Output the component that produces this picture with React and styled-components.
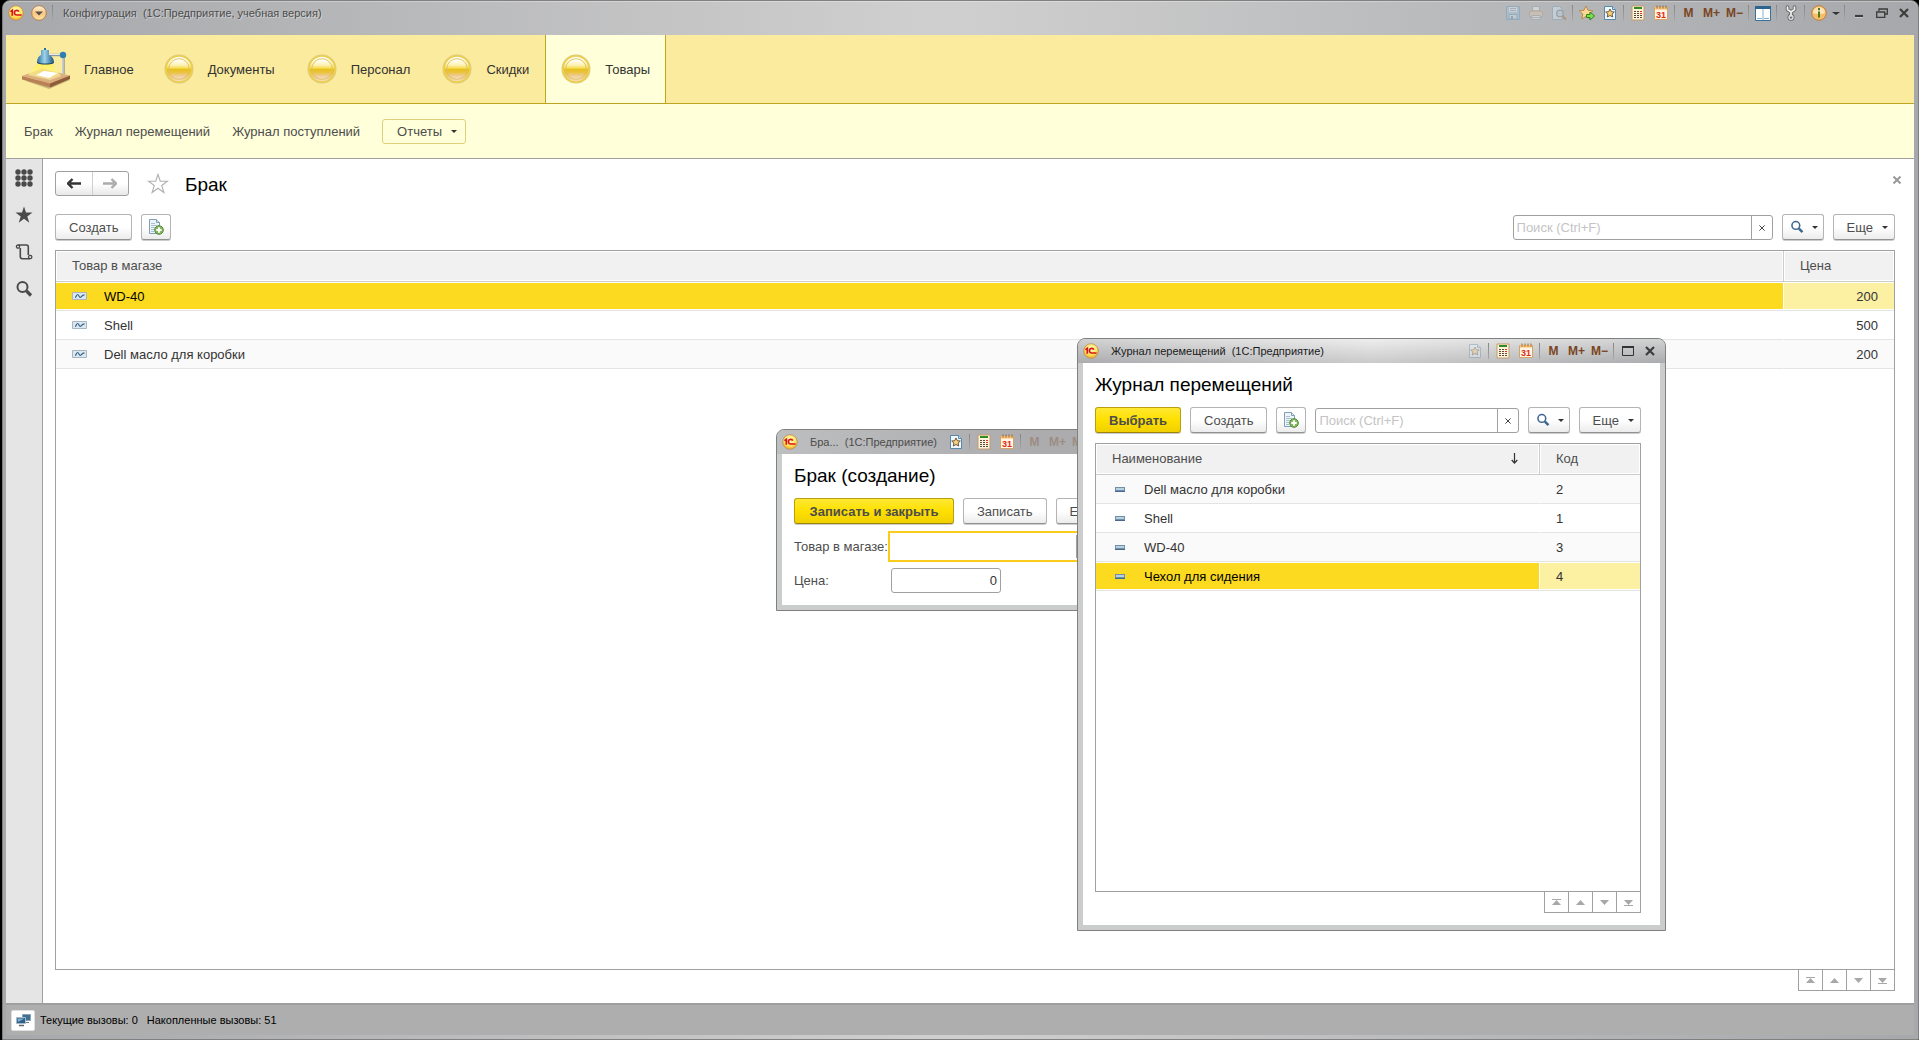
import React from 'react'
import styled, { createGlobalStyle } from 'styled-components';

const GlobalStyle = createGlobalStyle`
  * {
    box-sizing: border-box;
  }
  body {
    margin: 0;
    background: #000000;
    font-family: "Liberation Sans", Arial, sans-serif;
    font-size: 13px;
    color: #404040;
  }
  button, input {
    font-family: inherit;
    font-size: inherit;
    color: inherit;
  }
  svg {
    display: block;
    flex: none;
  }
`;

/* ---------- icons ---------- */

const Logo = () => (
  <svg width="16" height="16" viewBox="0 0 16 16">
    <defs>
      <radialGradient id="logoFill" cx="50%" cy="35%" r="65%">
        <stop offset="0" stopColor="#fffbd0" />
        <stop offset="0.6" stopColor="#ffe65c" />
        <stop offset="1" stopColor="#f0a830" />
      </radialGradient>
    </defs>
    <circle cx="8" cy="8" r="7.3" fill="url(#logoFill)" stroke="#b98a5a" strokeWidth="0.8" />
    <path d="M2.400 6.600 4.300 5.400V10.800" fill="none" stroke="#d8141c" strokeWidth="1.700" />
    <path d="M10.800 6.700A2.300 2.300 0 1 0 8.800 10H13.600" fill="none" stroke="#d8141c" strokeWidth="1.700" />
  </svg>
);

const MenuBall = () => (
  <svg width="16" height="16" viewBox="0 0 16 16">
    <defs>
      <linearGradient id="ballFill" x1="0" y1="0" x2="0" y2="1">
        <stop offset="0" stopColor="#fff3df" />
        <stop offset="0.5" stopColor="#f9c884" />
        <stop offset="1" stopColor="#ffe0a0" />
      </linearGradient>
    </defs>
    <circle cx="8" cy="8" r="7.3" fill="url(#ballFill)" stroke="#b07c48" strokeWidth="0.9" />
    <path d="M4 6.6h8L8 10.6z" fill="#5a5148" />
  </svg>
);

const SaveIcon = () => (
  <svg width="16" height="16" viewBox="0 0 16 16" opacity="0.45">
    <path d="M1.5 1.5h13v13h-13z" fill="#9fc4de" stroke="#6a9cc2" />
    <path d="M4 2h8v5H4z" fill="#e8f0f6" />
    <path d="M5 3.5h6M5 5.5h6" stroke="#8aa4b8" />
    <path d="M4 9.500h8V14H4z" fill="#d4e2ec" stroke="#6a9cc2" />
    <path d="M6 11h2v3H6z" fill="#5f8db0" />
  </svg>
);

const PrintIcon = () => (
  <svg width="16" height="16" viewBox="0 0 16 16" opacity="0.45">
    <path d="M4.500 1.500h7V6h-7z" fill="#f4f4f4" stroke="#8ea3b4" />
    <rect x="1.500" y="6" width="13" height="6" rx="1.500" fill="#e6c9a8" stroke="#a8957e" />
    <path d="M4 10.500h8v4H4z" fill="#f4f4f4" stroke="#8ea3b4" />
    <path d="M5 12.500h6" stroke="#8ea3b4" />
  </svg>
);

const PreviewIcon = () => (
  <svg width="16" height="16" viewBox="0 0 16 16" opacity="0.45">
    <path d="M1.500 1.500h7l3 3v10h-10z" fill="#dbe9f3" stroke="#7fa5c0" />
    <circle cx="9" cy="8.500" r="3.300" fill="#bcd6e8" stroke="#6b8aa2" strokeWidth="1.300" />
    <path d="m11.500 11 3.500 3.500" stroke="#a9713f" strokeWidth="2.200" />
  </svg>
);

const StarGoIcon = () => (
  <svg width="16" height="16" viewBox="0 0 16 16">
    <path d="m7 1 2 4.300 5 .5-3.700 3.200 1 5L7 11.400 2.800 14l1-5L.3 5.800l4.700-.5z" fill="#fbd891" stroke="#b08447" strokeWidth="0.900" />
    <path d="M7.500 9.500h3.500V7l4.600 4-4.600 4v-2.500H7.500z" fill="#7fe04a" stroke="#2b8420" />
  </svg>
);

const DocStarIcon = ({ faded }) => (
  <svg width="14" height="16" viewBox="0 0 14 16" opacity={faded ? 0.35 : 1}>
    <path d="M1.500 1.500h8l3 3v10h-11z" fill="#f1f8fd" stroke="#5689ab" />
    <path d="M9.500 1.500v3h3" fill="#c6dceb" stroke="#5689ab" />
    <path d="m7 4 1.300 2.700 3 .3-2.200 2 .6 3L7 10.500 4.300 12l.6-3-2.200-2 3-.3z" fill="#fad079" stroke="#5e4a31" strokeWidth="0.900" />
  </svg>
);

const CalcIcon = () => (
  <svg width="14" height="16" viewBox="0 0 14 16">
    <path d="M1 1h12v14H1z" fill="#fff3dc" stroke="#c49a6c" />
    <path d="M3 2h8v2H3z" fill="#2f8c1e" />
    <path d="M3 6.500h2M3 8.500h2M3 10.500h2M3 12.500h2M6 6.500h2M6 8.500h2M6 10.500h2M6 12.500h2M9 10.500h2M9 12.500h2" stroke="#5c4a38" />
    <path d="M9 6.500h2M9 8.500h2" stroke="#e03020" />
  </svg>
);

const CalendarIcon = () => (
  <svg width="14" height="16" viewBox="0 0 14 16">
    <path d="M.5 2.500h13v12H.5z" fill="#fff6e6" stroke="#d3a468" />
    <path d="M1 2h12v2.500H1z" fill="#f6bf72" />
    <path d="M3 .5v3M6 .5v3M9 .5v3M12 .5v3" stroke="#9b6a34" />
    <text x="7" y="13" textAnchor="middle" fontSize="9" fontWeight="bold" fill="#e02a14">31</text>
  </svg>
);

const ColumnsIcon = () => (
  <svg width="16" height="15" viewBox="0 0 16 15">
    <path d="M.5.5h15v14H.5z" fill="#ffffff" stroke="#39719c" />
    <path d="M0 0h16v3H0z" fill="#2d6591" />
    <path d="M8 3v11M2 12.500h5M9 12.500h5" stroke="#8db1cb" />
  </svg>
);

const WrenchIcon = () => (
  <svg width="12" height="16" viewBox="0 0 12 16" fill="none" strokeLinecap="round" strokeLinejoin="round">
    <path d="M2.500 2v2.500L6 7l3.500-2.500V2M6 7v4" stroke="#666666" strokeWidth="3.600" />
    <circle cx="6" cy="12.300" r="2" stroke="#666666" strokeWidth="3" />
    <path d="M2.500 2v2.500L6 7l3.500-2.500V2M6 7v4" stroke="#f2f2f2" strokeWidth="1.700" />
    <circle cx="6" cy="12.300" r="2" stroke="#e4e4e4" strokeWidth="1.300" />
  </svg>
);

const InfoIcon = () => (
  <svg width="16" height="16" viewBox="0 0 16 16">
    <circle cx="8" cy="8" r="7.300" fill="#f8bd68" stroke="#b97b3a" strokeWidth="0.900" />
    <path d="M2 8a6 6 0 0 1 12 0c-3 1.500-9 1.500-12 0z" fill="#fde3b8" />
    <path d="M8 3v2.200M8 6.500v6" stroke="#4d7a1c" strokeWidth="2" />
  </svg>
);

const Caret = ({ size = 6, color = '#333333' }) => (
  <svg width={size} height="3" viewBox="0 0 6 3" preserveAspectRatio="none">
    <path d="M0 0h6L3 3z" fill={color} />
  </svg>
);

const MinimizeIcon = () => (
  <svg width="12" height="12" viewBox="0 0 12 12">
    <path d="M2 10.500h8" stroke="#ffffff" strokeOpacity="0.5" />
    <path d="M2 9h8" stroke="#3c3c3c" strokeWidth="2.200" />
  </svg>
);

const RestoreIcon = () => (
  <svg width="12" height="12" viewBox="0 0 12 12">
    <path d="M3 4V2h8.300v5H9" fill="none" stroke="#3c3c3c" strokeWidth="1.300" />
    <path d="M.7 5h8v5.300h-8z" fill="none" stroke="#3c3c3c" strokeWidth="1.300" />
  </svg>
);

const MaximizeIcon = () => (
  <svg width="12" height="12" viewBox="0 0 12 12">
    <path d="M.5 1.500h11v9H.5z" fill="none" stroke="#333333" />
    <path d="M0 2h12" stroke="#333333" strokeWidth="2" />
  </svg>
);

const CloseIcon = () => (
  <svg width="10" height="10" viewBox="0 0 10 10">
    <path d="m1 1 8 8M9 1 1 9" stroke="#3c3c3c" strokeWidth="2.200" />
  </svg>
);

const SmallCross = ({ size = 6, color = '#444444', weight = 1 }) => (
  <svg width={size} height={size} viewBox="0 0 6 6">
    <path d="M.4.4l5.200 5.200M5.600.4.4 5.600" stroke={color} strokeWidth={weight} />
  </svg>
);

const LampIcon = () => (
  <svg width="48" height="42" viewBox="0 0 48 42">
    <defs>
      <linearGradient id="beam" x1="0" y1="0" x2="0" y2="1">
        <stop offset="0" stopColor="#fff04a" />
        <stop offset="1" stopColor="#fff9b0" stopOpacity="0.600" />
      </linearGradient>
      <linearGradient id="shade" x1="0" y1="0" x2="1" y2="0">
        <stop offset="0" stopColor="#2b6f9c" />
        <stop offset="0.450" stopColor="#9bd3ec" />
        <stop offset="1" stopColor="#1b5480" />
      </linearGradient>
    </defs>
    <path d="M4 33 27 41l21-9-4-3z" fill="#8a7a50" opacity="0.450" />
    <path d="M0 28 20 20.500 48 27.500 28 35.500z" fill="#dcae7e" />
    <path d="M0 28 28 35.500V39.500L0 31.500z" fill="#b98055" />
    <path d="M28 35.500 48 27.500V31L28 39.500z" fill="#8f5c3a" />
    <path d="M16 15h14l9 13-11 4-22-5z" fill="url(#beam)" opacity="0.850" />
    <path d="m14 27 8-4 14 2-9 5z" fill="#ffffff" />
    <path d="M27 7h14" stroke="#8f969b" strokeWidth="2.400" />
    <path d="M27 6.500h14" stroke="#e8ecef" />
    <path d="M41.500 8v18" stroke="#8f969b" strokeWidth="2.400" />
    <path d="M41 8v18" stroke="#e8ecef" />
    <circle cx="41" cy="7" r="3.200" fill="#2e7fb2" />
    <path d="M23 0v3" stroke="#2b6f9c" strokeWidth="2" />
    <path d="M19 2h8v5c3 1 5 4 5 7.500-4 2-13 2-17 0C15 11 16.500 8 19 7z" fill="url(#shade)" />
    <path d="M15 14c4 2 13 2 17 0v1c-4 2-13 2-17 0z" fill="#123f63" />
  </svg>
);

const CoinIcon = () => (
  <svg width="30" height="30" viewBox="0 0 30 30">
    <defs>
      <linearGradient id="coinFill" x1="0" y1="0" x2="0" y2="1">
        <stop offset="0.050" stopColor="#fffef4" />
        <stop offset="0.300" stopColor="#fdf3b8" />
        <stop offset="0.460" stopColor="#f6dc52" />
        <stop offset="0.520" stopColor="#e8c01c" />
        <stop offset="0.680" stopColor="#ebc444" />
        <stop offset="0.820" stopColor="#efcb92" />
        <stop offset="1" stopColor="#f8e2b8" />
      </linearGradient>
    </defs>
    <circle cx="15" cy="15" r="14.500" fill="#ddc98a" />
    <circle cx="15" cy="15" r="13" fill="url(#coinFill)" stroke="#ecd04a" strokeWidth="1.600" />
    <circle cx="15" cy="15" r="10.300" fill="url(#coinFill)" stroke="#dcc06a" strokeWidth="0.900" />
  </svg>
);

const GridIcon = () => (
  <svg width="18" height="18" viewBox="0 0 18 18" fill="#4a4a4a">
    {[3, 9, 15].map((y) => [3, 9, 15].map((x) => <circle key={`${x}-${y}`} cx={x} cy={y} r="2.700" />))}
  </svg>
);

const StarIcon = () => (
  <svg width="18" height="18" viewBox="0 0 18 18">
    <path d="m9 .5 2 6h6.500l-5.200 3.900 2 6.300L9 12.800l-5.300 3.900 2-6.300L.5 6.500H7z" fill="#4a4a4a" />
  </svg>
);

const ScrollIcon = () => (
  <svg width="18" height="18" viewBox="0 0 18 18" fill="none" stroke="#4a4a4a" strokeWidth="1.600">
    <path d="M3.500 2h8c1.200 0 1.800.8 1.800 2v8M5.300 5v8.500c0 1.300.7 2.200 2 2.200h8" />
    <circle cx="3" cy="3.600" r="1.600" strokeWidth="1.300" />
    <circle cx="15.200" cy="14" r="1.700" strokeWidth="1.300" />
  </svg>
);

const SearchIcon = ({ size = 18, color = '#4a4a4a' }) => (
  <svg width={size} height={size} viewBox="0 0 18 18" fill="none" stroke={color}>
    <circle cx="7.500" cy="7" r="5" strokeWidth="2" />
    <path d="m11.500 11 4.500 4.500" strokeWidth="3.200" />
  </svg>
);

const ArrowIcon = ({ flip, color }) => (
  <svg width="14" height="11" viewBox="0 0 14 11">
    <path d={flip ? 'M0 5.500h11M8.500 1l4.500 4.500L8.500 10' : 'M14 5.500H3M5.500 1 1 5.500 5.500 10'} fill="none" stroke={color} strokeWidth="2.400" />
  </svg>
);

const OutlineStar = () => (
  <svg width="22" height="21" viewBox="0 0 22 21">
    <path d="m11 1.500 2.300 6.700h7.200l-5.800 4.300 2.200 7L11 15.300l-5.900 4.200 2.200-7L1.500 8.200h7.200z" fill="#ffffff" stroke="#b0b0b0" strokeWidth="1.100" />
  </svg>
);

const CopyIcon = () => (
  <svg width="16" height="16" viewBox="0 0 16 16">
    <path d="M1.500.5h7l3 3v11h-10z" fill="#eef4f8" stroke="#7f9fb6" />
    <path d="M8.500.5v3h3" fill="#cfdfe9" stroke="#7f9fb6" />
    <path d="M3 4.500h4M3 6.500h6M3 8.500h4M3 10.500h3M3 12.500h3" stroke="#a9c0d0" />
    <circle cx="11" cy="11" r="4.300" fill="#86ba5c" stroke="#4f8836" />
    <path d="M11 8.300v5.400M8.300 11h5.400" stroke="#ffffff" strokeWidth="1.800" />
  </svg>
);

const RecordIcon = () => (
  <svg width="15" height="8" viewBox="0 0 15 8">
    <path d="M.5.5h14v7H.5z" fill="#dbe8f1" stroke="#a9b6c0" />
    <path d="M3 5.500c1.300 0 1.300-3 2.600-3S7 5.500 8.200 5.500 9.500 2.800 12.500 2.800" fill="none" stroke="#3a6488" strokeWidth="1.200" />
  </svg>
);

const ItemIcon = () => (
  <svg width="10" height="5" viewBox="0 0 10 5">
    <path d="M0 0h10v5H0z" fill="#6f90aa" />
    <path d="M1 1h8v2H1z" fill="#b8d0e0" />
    <path d="M0 4h10v1H0z" fill="#48698a" />
  </svg>
);

const SortIcon = () => (
  <svg width="7" height="11" viewBox="0 0 7 11">
    <path d="M3.500 0v10" stroke="#333333" strokeWidth="1.200" />
    <path d="M.7 7 3.500 10 6.300 7" fill="none" stroke="#333333" strokeWidth="1.200" />
  </svg>
);

const PagerIcon = ({ down, end }) => (
  <svg width="9" height="7" viewBox="0 0 9 7">
    <g transform={down ? 'rotate(180 4.500 3.500)' : undefined} fill="#a8a8a8">
      <path d="M4.500 1 9 6H0z" />
      {end && <path d="M0 0h9v1H0z" />}
    </g>
  </svg>
);

const MonitorsIcon = () => (
  <svg width="15" height="13" viewBox="0 0 15 13">
    <path d="M6.500.5h8v6h-8z" fill="#3d7096" stroke="#8fa0ad" />
    <path d="M9 8.500h4" stroke="#777777" />
    <path d="M.5 3.500h9v6h-9z" fill="#2c618b" stroke="#a9bac6" />
    <path d="M1.500 4.500h7L2 8z" fill="#7fb0d1" />
    <path d="M3 11.500h5" stroke="#666666" strokeWidth="1.500" />
  </svg>
);

/* ---------- shared parts ---------- */

const Memory = ({ faded }) => (
  <>
    <ToolButton $faded={faded}>M</ToolButton>
    <ToolButton $faded={faded}>M+</ToolButton>
    <ToolButton $faded={faded}>M−</ToolButton>
  </>
);

const SearchBox = ({ id, width }) => (
  <SearchField $width={width}>
    <SearchInput id={id} aria-label="Поиск" placeholder="Поиск (Ctrl+F)" />
    <ClearButton aria-label="Очистить"><SmallCross /></ClearButton>
  </SearchField>
);

const MoreButtons = () => (
  <>
    <Button $tight aria-label="Найти"><SearchIcon size={14} color="#3d6690" /><Caret /></Button>
    <Button $more>Еще<Caret /></Button>
  </>
);

const Pager = () => (
  <PagerRow>
    <PagerButton aria-label="В начало"><PagerIcon end /></PagerButton>
    <PagerButton aria-label="Вверх"><PagerIcon /></PagerButton>
    <PagerButton aria-label="Вниз"><PagerIcon down /></PagerButton>
    <PagerButton aria-label="В конец"><PagerIcon down end /></PagerButton>
  </PagerRow>
);

const sections = ['Документы', 'Персонал', 'Скидки', 'Товары'];

const defects = [
  { name: 'WD-40', price: 200 },
  { name: 'Shell', price: 500 },
  { name: 'Dell масло для коробки', price: 200 },
];

const goods = [
  { name: 'Dell масло для коробки', code: 2 },
  { name: 'Shell', code: 1 },
  { name: 'WD-40', code: 3 },
  { name: 'Чехол для сидения', code: 4 },
];

const CreateWindow = () => (
  <Dialog $left={776} $top={429} $width={371}>
    <DialogBar $inactive>
      <Logo />
      <DialogCaption>Бра...&nbsp; (1С:Предприятие)</DialogCaption>
      <Tools>
        <ToolButton aria-label="В избранное"><DocStarIcon /></ToolButton>
        <Separator />
        <ToolButton aria-label="Калькулятор"><CalcIcon /></ToolButton>
        <ToolButton aria-label="Календарь"><CalendarIcon /></ToolButton>
        <Separator />
        <Memory faded />
        <Separator />
        <ToolButton aria-label="Развернуть"><MaximizeIcon /></ToolButton>
        <ToolButton aria-label="Закрыть"><CloseIcon /></ToolButton>
      </Tools>
    </DialogBar>
    <DialogBody>
      <DialogTitle>Брак (создание)</DialogTitle>
      <Toolbar>
        <Button $primary $minWidth={160}>Записать и закрыть</Button>
        <Button>Записать</Button>
        <Button $more>Еще<Caret /></Button>
      </Toolbar>
      <Form>
        <label htmlFor="item">Товар в магазе:</label>
        <ActiveField>
          <FieldInput id="item" />
          <FieldPick aria-label="Выбрать товар"><Caret /></FieldPick>
        </ActiveField>
        <label htmlFor="price">Цена:</label>
        <PriceInput id="price" defaultValue="0" />
      </Form>
    </DialogBody>
  </Dialog>
);

const JournalWindow = () => (
  <Dialog $left={1077} $top={338} $width={589} $height={593}>
    <DialogBar>
      <Logo />
      <DialogCaption>Журнал перемещений&nbsp; (1С:Предприятие)</DialogCaption>
      <Tools>
        <ToolButton aria-label="В избранное"><DocStarIcon faded /></ToolButton>
        <Separator />
        <ToolButton aria-label="Калькулятор"><CalcIcon /></ToolButton>
        <ToolButton aria-label="Календарь"><CalendarIcon /></ToolButton>
        <Separator />
        <Memory />
        <Separator />
        <ToolButton aria-label="Развернуть"><MaximizeIcon /></ToolButton>
        <ToolButton aria-label="Закрыть"><CloseIcon /></ToolButton>
      </Tools>
    </DialogBar>
    <DialogBody>
      <DialogTitle>Журнал перемещений</DialogTitle>
      <Toolbar>
        <Button $primary>Выбрать</Button>
        <Button>Создать</Button>
        <Button $icon aria-label="Скопировать"><CopyIcon /></Button>
        <SearchBox id="journal-search" />
        <MoreButtons />
      </Toolbar>
      <TableFrame>
        <Table>
          <thead>
            <tr>
              <Th><HeadCell>Наименование<SortIcon /></HeadCell></Th>
              <Th $width={101}>Код</Th>
            </tr>
          </thead>
          <tbody>
            {goods.map((row) => (
              <Row key={row.name} $selected={row.code === 4}>
                <Td><NameCell $inset><ItemIcon />{row.name}</NameCell></Td>
                <Td>{row.code}</Td>
              </Row>
            ))}
          </tbody>
        </Table>
      </TableFrame>
      <Pager />
    </DialogBody>
  </Dialog>
);

const App = () => {
  return (
    <>
      <GlobalStyle />
      <Frame>
        <TitleBar>
          <Logo />
          <RoundButton aria-label="Меню"><MenuBall /></RoundButton>
          <Separator />
          <Caption>Конфигурация&nbsp; (1С:Предприятие, учебная версия)</Caption>
          <Tools>
            <ToolButton aria-label="Сохранить"><SaveIcon /></ToolButton>
            <ToolButton aria-label="Печать"><PrintIcon /></ToolButton>
            <ToolButton aria-label="Просмотр"><PreviewIcon /></ToolButton>
            <Separator />
            <ToolButton aria-label="Добавить в избранное"><StarGoIcon /></ToolButton>
            <ToolButton aria-label="Избранное"><DocStarIcon /></ToolButton>
            <Separator />
            <ToolButton aria-label="Калькулятор"><CalcIcon /></ToolButton>
            <ToolButton aria-label="Календарь"><CalendarIcon /></ToolButton>
            <Separator />
            <Memory />
            <Separator />
            <ToolButton aria-label="Панели"><ColumnsIcon /></ToolButton>
            <Separator />
            <ToolButton aria-label="Настройки"><WrenchIcon /></ToolButton>
            <Separator />
            <ToolButton aria-label="Справка"><InfoIcon /></ToolButton>
            <ToolButton $narrow aria-label="Еще команды"><Caret size={8} /></ToolButton>
            <Separator />
            <ToolButton aria-label="Свернуть"><MinimizeIcon /></ToolButton>
            <ToolButton aria-label="Восстановить"><RestoreIcon /></ToolButton>
            <ToolButton aria-label="Закрыть"><CloseIcon /></ToolButton>
          </Tools>
        </TitleBar>

        <Sections>
          <Section href="#main"><LampIcon />Главное</Section>
          {sections.map((name) => (
            <Section key={name} href={`#${name}`} $active={name === 'Товары'}><CoinIcon />{name}</Section>
          ))}
        </Sections>

        <Commands>
          <Command href="#defects">Брак</Command>
          <Command href="#moves">Журнал перемещений</Command>
          <Command href="#receipts">Журнал поступлений</Command>
          <ReportsButton>Отчеты<Caret /></ReportsButton>
        </Commands>

        <Body>
          <Sidebar>
            <SideButton aria-label="Все функции"><GridIcon /></SideButton>
            <SideButton aria-label="Избранное"><StarIcon /></SideButton>
            <SideButton aria-label="История"><ScrollIcon /></SideButton>
            <SideButton aria-label="Поиск"><SearchIcon /></SideButton>
          </Sidebar>
          <Content>
            <PageHead>
              <NavButtons>
                <NavButton aria-label="Назад"><ArrowIcon color="#333333" /></NavButton>
                <NavButton aria-label="Вперед"><ArrowIcon flip color="#ababab" /></NavButton>
              </NavButtons>
              <PlainButton aria-label="В избранное"><OutlineStar /></PlainButton>
              <PageTitle>Брак</PageTitle>
              <PageClose aria-label="Закрыть"><SmallCross size={8} color="#9a9a9a" weight={1.5} /></PageClose>
            </PageHead>
            <Toolbar>
              <Button>Создать</Button>
              <Button $icon aria-label="Скопировать"><CopyIcon /></Button>
              <Spacer />
              <SearchBox id="search" width={260} />
              <MoreButtons />
            </Toolbar>
            <TableFrame>
              <Table>
                <thead>
                  <tr>
                    <Th>Товар в магазе</Th>
                    <Th $width={111}>Цена</Th>
                  </tr>
                </thead>
                <tbody>
                  {defects.map((row) => (
                    <Row key={row.name} $selected={row.name === 'WD-40'}>
                      <Td><NameCell><RecordIcon />{row.name}</NameCell></Td>
                      <Td $right>{row.price}</Td>
                    </Row>
                  ))}
                </tbody>
              </Table>
            </TableFrame>
            <Pager />
          </Content>
        </Body>

        <StatusBar>
          <StatusButton aria-label="Вызовы сервера"><MonitorsIcon /></StatusButton>
          <span>Текущие вызовы: 0</span>
          <span>Накопленные вызовы: 51</span>
        </StatusBar>
      </Frame>
      <CreateWindow />
      <JournalWindow />
    </>
  )
}

export default App;

/* ---------- styles ---------- */

const Frame = styled.div`
  display: flex;
  flex-direction: column;
  min-height: 100vh;
  margin-left: 2px;
  padding: 0 4px 4px 3px;
  border: 1px solid #808080;
  border-radius: 8px 8px 0 0;
  background: linear-gradient(to right, #a7a8ab, #cfcfcf 48%, #cfcfcf 50%, #b7b8ba 78%, #a7a8ab);
  box-shadow: inset 0 1px 0 rgba(255, 255, 255, 0.3);
`;

const TitleBar = styled.header`
  display: flex;
  align-items: center;
  height: 34px;
  padding: 0 0 10px 2px;
  font-size: 11px;
  color: #4c4c4c;
`;

const RoundButton = styled.button`
  margin: 0 3px 0 7px;
  padding: 0;
  border: none;
  background: none;
`;

const Separator = styled.span`
  flex: none;
  width: 1px;
  height: 16px;
  margin: 0 2px;
  background: linear-gradient(#858587, #a8a8aa);
`;

const Caption = styled.span`
  margin-left: 8px;
  text-shadow: 1px 1px 0 rgba(255, 255, 255, 0.4);
`;

const Tools = styled.div`
  display: flex;
  align-items: center;
  margin-left: auto;
`;

const ToolButton = styled.button`
  display: flex;
  align-items: center;
  justify-content: center;
  flex: none;
  width: ${(p) => (p.$narrow ? '12px' : '23px')};
  height: 18px;
  padding: 0;
  border: none;
  background: none;
  font-size: 12px;
  font-weight: bold;
  color: #7a4522;
  opacity: ${(p) => (p.$faded ? 0.3 : 1)};

  &:last-child {
    width: 21px;
  }
`;

const Sections = styled.nav`
  display: flex;
  height: 69px;
  border-bottom: 1px solid #bda522;
  background: #fbeb9e;
`;

const Section = styled.a`
  display: flex;
  align-items: center;
  gap: 14px;
  padding: 0 ${(p) => (p.$active ? '15px' : '16px')};
  border: solid #bda522;
  border-width: ${(p) => (p.$active ? '0 1px' : '0')};
  background: ${(p) => (p.$active ? '#ffffd9' : 'none')};
  color: #333333;
  text-decoration: none;

  &:first-child {
    padding-right: 14px;
  }
`;

const Commands = styled.nav`
  display: flex;
  align-items: center;
  gap: 22px;
  height: 55px;
  padding-left: 18px;
  border-bottom: 1px solid #a0a0a0;
  background: #ffffd9;
`;

const Command = styled.a`
  color: #4d4d4d;
  text-decoration: none;
`;

const ReportsButton = styled.button`
  display: flex;
  align-items: center;
  gap: 9px;
  height: 25px;
  padding: 0 8px 0 14px;
  border: 1px solid #e0cf7c;
  border-radius: 3px;
  background: none;
  color: #4d4d4d;
`;

const Body = styled.div`
  display: flex;
  flex: 1;
  background: #ffffff;
`;

const Sidebar = styled.aside`
  display: flex;
  flex-direction: column;
  align-items: center;
  gap: 19px;
  width: 37px;
  padding-top: 10px;
  border-right: 1px solid #a0a0a0;
  background: #e5e5e5;
`;

const SideButton = styled.button`
  padding: 0;
  border: none;
  background: none;
`;

const Content = styled.main`
  display: flex;
  flex: 1;
  flex-direction: column;
  padding: 12px 19px 12px 12px;
`;

const PageHead = styled.div`
  display: flex;
  align-items: center;
  height: 25px;
  margin-bottom: 18px;
`;

const NavButtons = styled.div`
  display: flex;
  width: 74px;
  height: 25px;
  border: 1px solid #a0a0a0;
  border-radius: 3px;
  background: linear-gradient(#ffffff 50%, #e8e8e8);
`;

const NavButton = styled.button`
  display: flex;
  flex: 1;
  align-items: center;
  justify-content: center;
  padding: 0;
  border: none;
  background: none;

  & + & {
    border-left: 1px solid #d0d0d0;
  }
`;

const PlainButton = styled.button`
  margin: 0 16px 0 18px;
  padding: 0;
  border: none;
  background: none;
`;

const PageTitle = styled.h1`
  margin: 0;
  padding-top: 2px;
  font-size: 19px;
  font-weight: normal;
  color: #000000;
`;

const PageClose = styled.button`
  align-self: flex-start;
  margin: 5px -6px 0 auto;
  padding: 0;
  border: none;
  background: none;
`;

const Toolbar = styled.div`
  display: flex;
  gap: 9px;
  height: 27px;
  margin-bottom: 9px;
`;

const Spacer = styled.div`
  flex: 1;
`;

const Button = styled.button`
  display: flex;
  flex: none;
  align-items: center;
  justify-content: center;
  gap: ${(p) => (p.$tight ? '8px' : '9px')};
  min-width: ${(p) => (p.$minWidth ? `${p.$minWidth}px` : '0')};
  height: 26px;
  padding: ${(p) => (p.$icon ? '0 6px' : p.$more ? '0 6px 0 13px' : p.$tight ? '0 5px 0 7px' : '0 13px')};
  border: 1px solid;
  border-color: ${(p) => (p.$primary ? '#b89e10 #b89e10 #9c8508' : '#b4b4b4 #b4b4b4 #929292')};
  border-radius: 3px;
  background: ${(p) => (p.$primary ? 'linear-gradient(#ffe832, #fee000 50%, #f0d000)' : 'linear-gradient(#ffffff 50%, #ececec)')};
  box-shadow: 0 1px 0 rgba(0, 0, 0, 0.2);
  font-weight: ${(p) => (p.$primary ? 'bold' : 'normal')};
  color: #4d4d4d;
  white-space: nowrap;
`;

const SearchField = styled.div`
  display: flex;
  flex: ${(p) => (p.$width ? 'none' : '1')};
  width: ${(p) => (p.$width ? `${p.$width}px` : 'auto')};
  min-width: 0;
  height: 25px;
  margin-top: 1px;
  border: 1px solid #a0a0a0;
  border-radius: 3px;
  background: #ffffff;
`;

const SearchInput = styled.input`
  flex: 1;
  min-width: 0;
  padding: 0 3px;
  border: none;
  background: none;
  outline: none;

  &::placeholder {
    color: #c4c4c4;
  }
`;

const ClearButton = styled.button`
  display: flex;
  align-items: center;
  justify-content: center;
  width: 21px;
  padding: 0;
  border: none;
  border-left: 1px solid #a0a0a0;
  background: none;
`;

const TableFrame = styled.div`
  flex: 1;
  border: 1px solid #a0a0a0;
  background: #ffffff;
`;

const Table = styled.table`
  width: 100%;
  border-spacing: 0;
  table-layout: fixed;
`;

const Th = styled.th`
  width: ${(p) => (p.$width ? `${p.$width}px` : 'auto')};
  height: 31px;
  padding: 0 16px 2px;
  border-bottom: 1px solid #cccccc;
  background: #f1f1f1;
  box-shadow: inset 0 0 0 1px #ffffff;
  font-weight: normal;
  text-align: left;
  color: #4d4d4d;

  & + & {
    border-left: 1px solid #cccccc;
  }
`;

const HeadCell = styled.div`
  display: flex;
  align-items: center;
  justify-content: space-between;
  padding-right: 5px;
`;

const Td = styled.td`
  height: 29px;
  padding: 0 16px;
  border-bottom: 1px solid #e4e4e4;
  text-align: ${(p) => (p.$right ? 'right' : 'left')};
  color: #333333;
`;

const Row = styled.tr`
  &:nth-child(odd) {
    background: #fafafa;
  }

  ${Td} {
    ${(p) => p.$selected && `
      background: #fbda20;
      box-shadow: inset 0 1px 0 #ffffff, inset 0 -1px 0 #ffffff;
      color: #000000;
    `}
  }

  ${Td} + ${Td} {
    border-left: 1px solid ${(p) => (p.$selected ? '#ffffff' : 'transparent')};
    ${(p) => p.$selected && 'background: #fcf0a3; color: #333333;'}
  }
`;

const NameCell = styled.div`
  display: flex;
  align-items: center;
  gap: ${(p) => (p.$inset ? '19px' : '17px')};
  padding-left: ${(p) => (p.$inset ? '3px' : '0')};
`;

const PagerRow = styled.div`
  display: flex;
  justify-content: flex-end;
`;

const PagerButton = styled.button`
  display: flex;
  align-items: center;
  justify-content: center;
  width: 24px;
  height: 21px;
  padding: 0;
  border: solid #a0a0a0;
  border-width: 0 1px 1px 0;
  background: #ffffff;

  &:first-child {
    width: 25px;
    border-left-width: 1px;
  }
`;

const StatusBar = styled.footer`
  display: flex;
  align-items: center;
  gap: 9px;
  height: 32px;
  padding: 0 5px;
  border-top: 2px solid #9f9f9f;
  background: #aeaeae;
  font-size: 11px;
  color: #000000;
`;

const StatusButton = styled.button`
  display: flex;
  align-items: center;
  justify-content: center;
  width: 24px;
  height: 21px;
  margin-right: -4px;
  padding: 0;
  border: 1px solid #e0e0e0;
  border-radius: 2px;
  background: #ffffff;
`;

const Dialog = styled.section`
  position: absolute;
  left: ${(p) => p.$left}px;
  top: ${(p) => p.$top}px;
  display: flex;
  flex-direction: column;
  width: ${(p) => p.$width}px;
  height: ${(p) => (p.$height ? `${p.$height}px` : 'auto')};
  padding: 0 5px 5px;
  border: 1px solid #808080;
  border-radius: 8px 8px 0 0;
  background: #cbcdcd;
`;

const DialogBar = styled.header`
  display: flex;
  align-items: center;
  height: 24px;
  margin: 0 -5px;
  padding: 0 5px;
  border-radius: 7px 7px 0 0;
  background: ${(p) => (p.$inactive
    ? 'linear-gradient(to right, #bdbebf, #acacae 70%)'
    : 'linear-gradient(rgba(255, 255, 255, 0.3), rgba(120, 120, 125, 0.25)), linear-gradient(to right, #bcbdbe, #e6e6e6 50%, #bcbdbe)')};
  font-size: 11px;
  color: ${(p) => (p.$inactive ? '#4c4c4c' : '#1a1a1a')};
`;

const DialogCaption = styled.span`
  margin-left: 12px;
  white-space: nowrap;
`;

const DialogBody = styled.div`
  display: flex;
  flex: 1;
  flex-direction: column;
  padding: 12px 19px 12px 12px;
  background: #ffffff;
`;

const DialogTitle = styled.h2`
  margin: 0 0 12px;
  font-size: 19px;
  font-weight: normal;
  line-height: 20px;
  color: #000000;
`;

const Form = styled.form`
  display: grid;
  grid-template-columns: 94px 1fr;
  align-items: center;
  row-gap: 6px;
  margin-top: -3px;
  color: #4d4d4d;
`;

const ActiveField = styled.div`
  display: flex;
  height: 31px;
  padding: 2px;
  border: 2px solid #fbcb1e;
`;

const FieldInput = styled.input`
  width: 184px;
  border: none;
  outline: none;
`;

const FieldPick = styled.button`
  width: 21px;
  border: none;
  border-left: 1px solid #a0a0a0;
  background: none;
`;

const PriceInput = styled.input`
  width: 110px;
  height: 25px;
  margin-left: 3px;
  padding: 0 3px;
  border: 1px solid #a0a0a0;
  border-radius: 3px;
  text-align: right;
  color: #333333;
`;
